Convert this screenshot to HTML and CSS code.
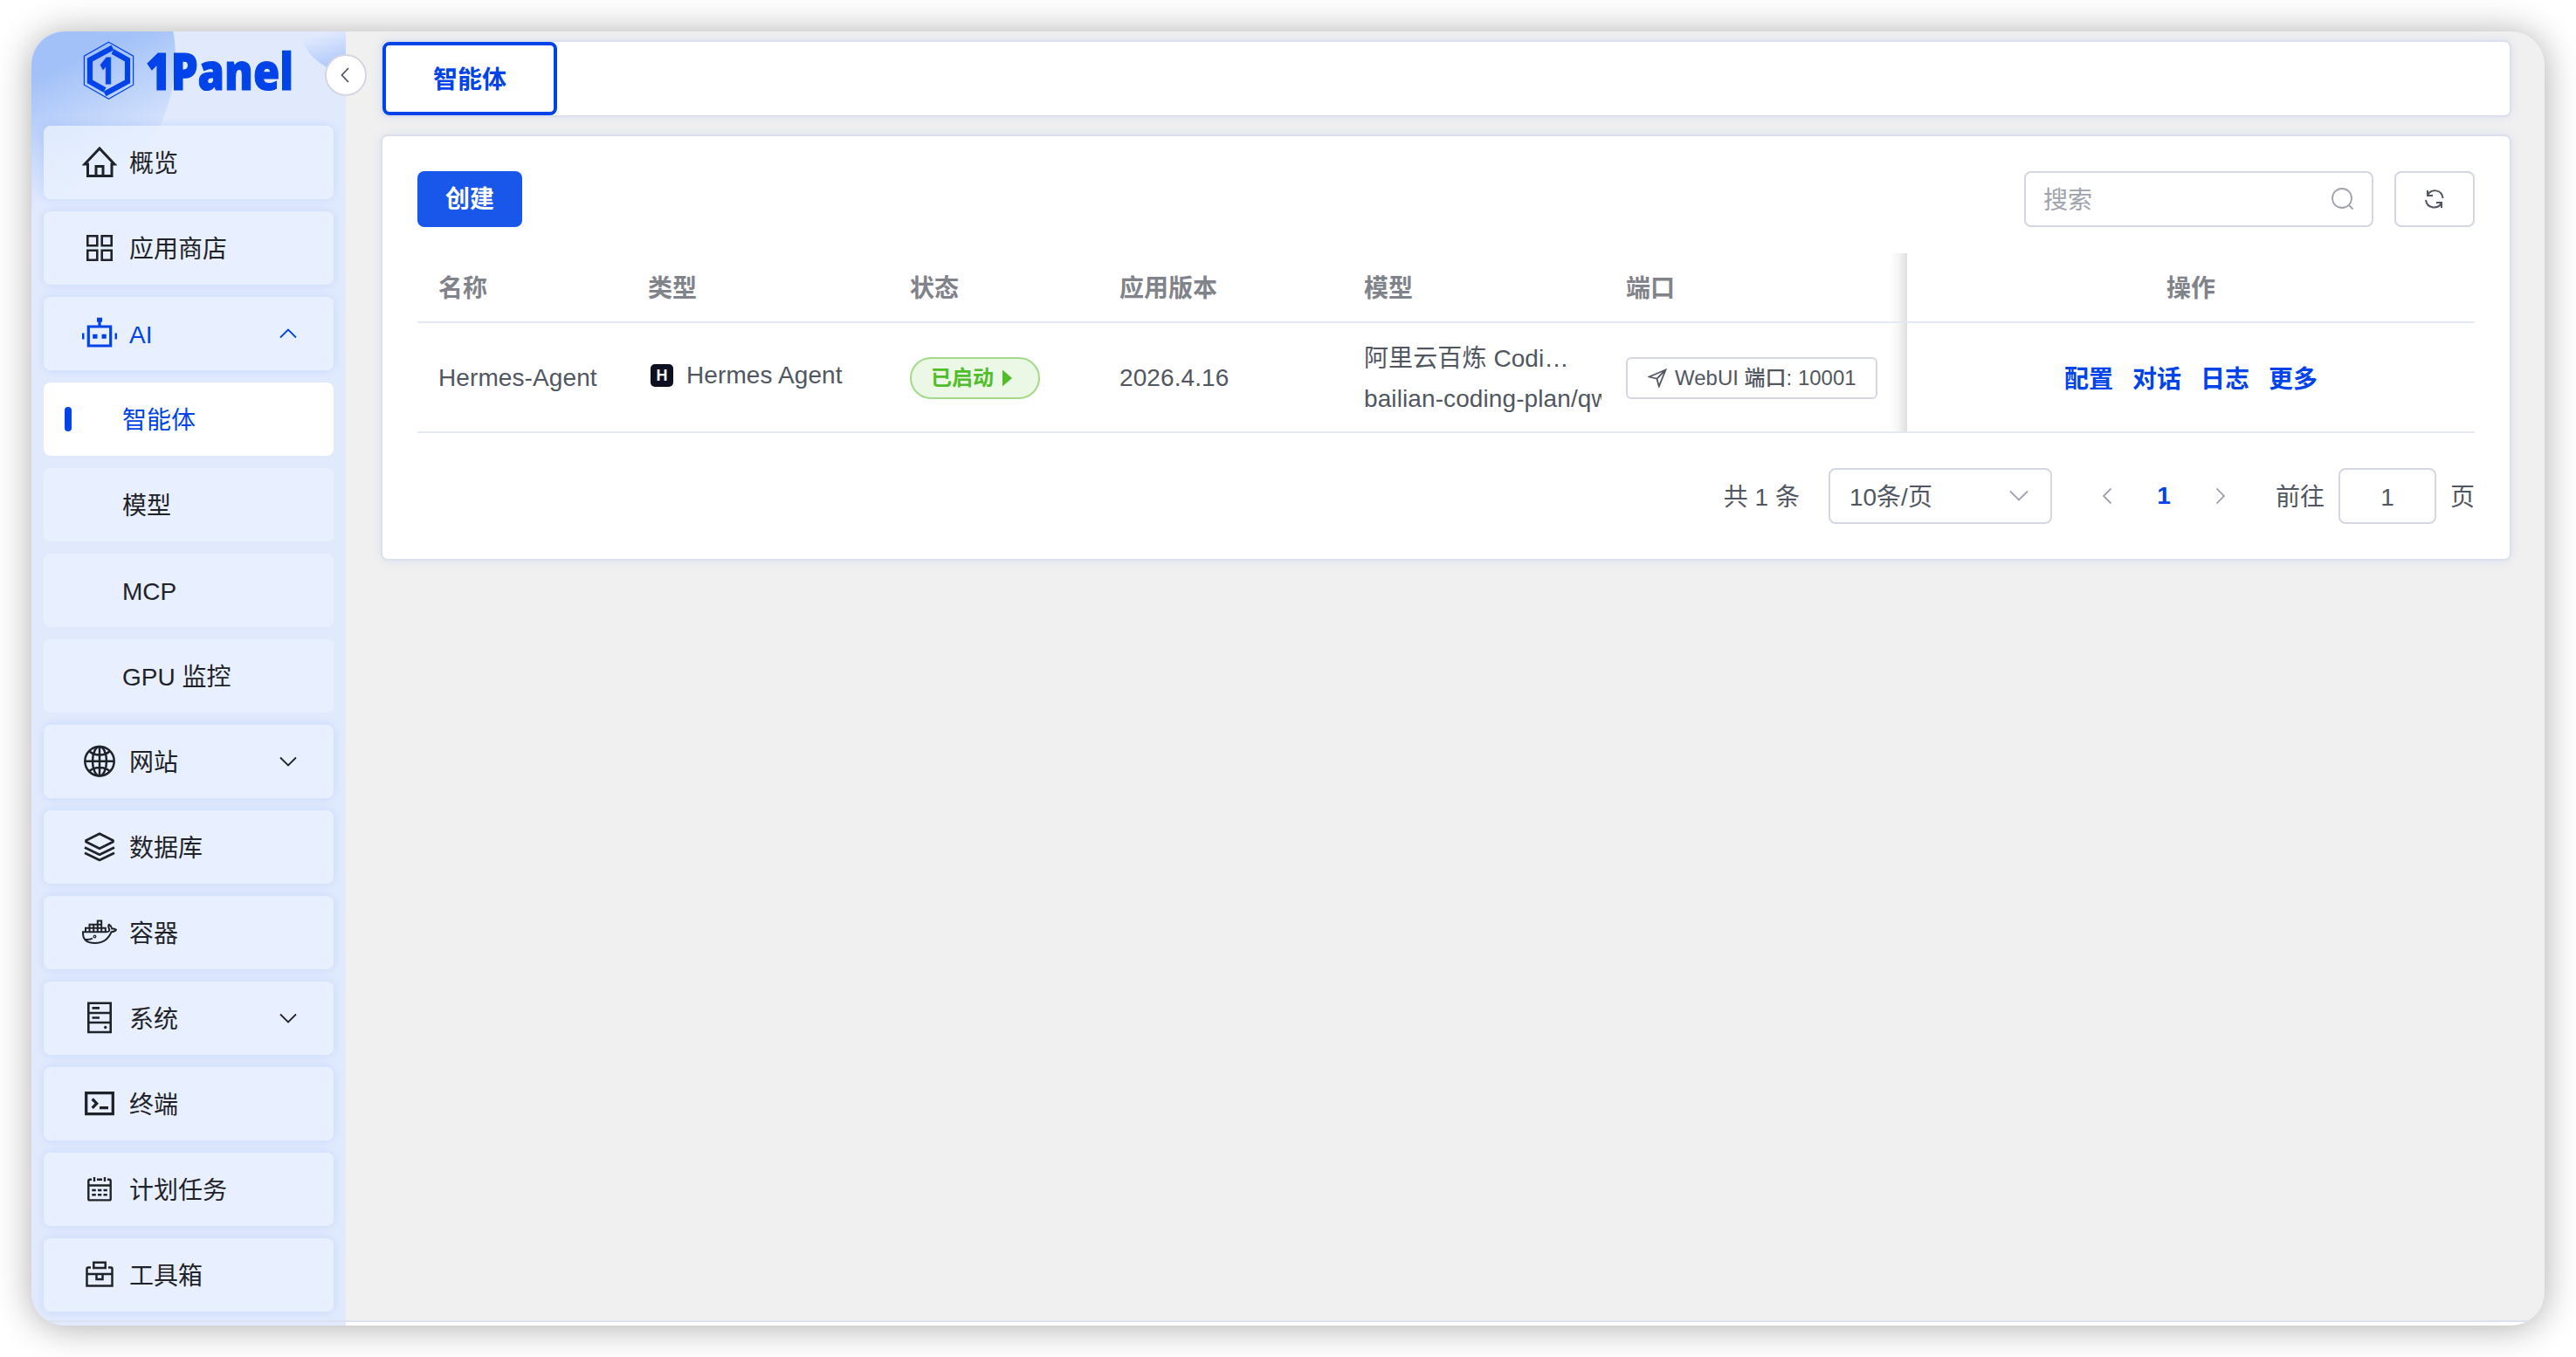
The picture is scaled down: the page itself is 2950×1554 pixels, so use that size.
FILE: index.html
```html
<!DOCTYPE html>
<html lang="zh-CN">
<head>
  <meta charset="UTF-8" />
  <title>1Panel</title>
  <link rel="stylesheet" href="styles.css">
</head>
<body>
  <div class="window">
    <aside class="sidebar">
      <span class="bubble bubble-lg"></span>
      <span class="bubble bubble-sm"></span>
      <div class="logo">
        <svg class="logo-svg" width="260" height="90" viewBox="0 0 260 90">
          <path d="M30.500 1.200 58.600 17.200V50.200L30.500 66.200 2.400 50.200V17.200Z" fill="none" stroke="#0043e8" stroke-width="1.2" />
          <g fill="none" stroke="#0043e8" stroke-width="6.200">
            <path d="M35 7.500 9 21.500V46.500L26 56" />
            <path d="M26 60.500 52 46.500V21.500L35 12" />
          </g>
          <text class="logo-mark" x="20" y="49" textLength="16" lengthAdjust="spacingAndGlyphs">1</text>
          <text class="logo-text" x="73" y="55.500" textLength="169" lengthAdjust="spacingAndGlyphs">1Panel</text>
        </svg>
      </div>
      <nav class="menu">
        <a class="item">
          <svg class="icon" viewBox="0 0 40 40"><path d="M3 22 20 4l17 18h-3v13.500H6.500V22ZM16 35V24.500h8V35" stroke-width="3" /></svg>
          <span>概览</span>
        </a>
        <a class="item">
          <svg class="icon" viewBox="0 0 40 40" stroke-width="2.600"><path d="M6.300 6.300h11v11h-11zM22.700 6.300h11v11h-11zM6.300 22.700h11v11h-11zM22.700 22.700h11v11h-11z" /></svg>
          <span>应用商店</span>
        </a>
        <a class="item current">
          <svg class="icon" viewBox="0 0 40 40" stroke-width="3.200">
            <path d="M7.300 12h25.400v22H7.300zM20 5v7" />
            <path d="M17 1.700h6v5h-6zM12.200 20.700h5.300v5h-5.300zM22.500 20.700h5.300v5h-5.300zM0 19.500h2.500v7H0zM37.500 19.500H40v7h-2.500z" fill="currentColor" stroke="none" />
          </svg>
          <span>AI</span>
          <svg class="arrow" viewBox="0 0 20 12"><path d="m1 10.500 9-9 9 9" /></svg>
        </a>
        <a class="item sub active"><span>智能体</span></a>
        <a class="item sub"><span>模型</span></a>
        <a class="item sub"><span>MCP</span></a>
        <a class="item sub"><span>GPU 监控</span></a>
        <a class="item">
          <svg class="icon" viewBox="0 0 40 40" stroke-width="2.500">
            <circle cx="20" cy="19.700" r="16.700" />
            <ellipse cx="20" cy="19.700" rx="8" ry="16.700" />
            <path d="M20 3v33.400M3 19.700h34M8 8c6 6 18 6 24 0M8 31.400c6-6 18-6 24 0" />
          </svg>
          <span>网站</span>
          <svg class="arrow" viewBox="0 0 20 12"><path d="m1 1.500 9 9 9-9" /></svg>
        </a>
        <a class="item">
          <svg class="icon" viewBox="0 0 40 40" stroke-width="2.700" stroke-linejoin="round"><path d="M20 4.700 35.500 12.500v1.500L20 21.800 4.500 14v-1.500ZM3 20.500l17 8.200 17-8.200M3 26.800 20 35l17-8.200" /></svg>
          <span>数据库</span>
        </a>
        <a class="item">
          <svg class="icon" viewBox="0 0 40 40" stroke-width="2">
            <path d="M1 19.300h27c3 0 3.500-1.500 3-3.500-1.500-3-.5-5 0-5 2 1.200 3 2.700 3.200 4.700 2.300-.3 4 .3 4.800 1.300-1 1.700-3 2.300-5.500 2.400C30 28 24 32 15 32 4 32 .5 27 1 19.300Z" />
            <path d="M4 19v-4.300h4.500V10.800h9.300V6.500h4.400v8.200h4.600V19M8.500 14.700V19M13.200 10.800V19M17.800 10.800V19M22.200 14.700V19M8.500 14.700h13.700M17.800 10.800h4.400M4 28c3.500.3 6-.2 8-1.500" />
            <circle cx="14.500" cy="24.500" r="1.300" stroke-width="1.300" />
          </svg>
          <span>容器</span>
        </a>
        <a class="item">
          <svg class="icon" viewBox="0 0 40 40" stroke-width="2.600">
            <path d="M7.300 2.700h25.400V36H7.300zM7.300 14h25.400M7.300 25h25.400M11.500 8.400h8.500M11.500 19.500h8.500" />
            <circle cx="26.700" cy="30.500" r="1.700" fill="currentColor" stroke="none" />
          </svg>
          <span>系统</span>
          <svg class="arrow" viewBox="0 0 20 12"><path d="m1 1.500 9 9 9-9" /></svg>
        </a>
        <a class="item">
          <svg class="icon" viewBox="0 0 40 40" stroke-width="3.300"><path d="M4.700 7.700h30.600v24H4.700zM11.700 14.500l5 5.200-5 5.200M20 24.700h10" /></svg>
          <span>终端</span>
        </a>
        <a class="item">
          <svg class="icon" viewBox="0 0 40 40" stroke-width="2.400"><path d="M11 8.800H9q-1.700 0-1.700 1.700V31q0 1.400 1.400 1.400h22.600q1.400 0 1.400-1.400V10.500q0-1.700-1.700-1.700h-2M17 8.800h6M14 6v5M26 6v5M7.300 15.500h25.400M11.300 21h4.500M18 21h4.300M24.500 21h4.300M11.300 26.300h4.500M18 26.300h4.300M24.500 26.300h4.300" /></svg>
          <span>计划任务</span>
        </a>
        <a class="item">
          <svg class="icon" viewBox="0 0 40 40" stroke-width="2.500"><path d="M10 11.500H7q-1.500 0-1.500 1.500v19.500h29V13q0-1.500-1.500-1.500h-3M13.300 12V5.700h13.400V12ZM5.500 19h29M16.500 19v6h7v-6" /></svg>
          <span>工具箱</span>
        </a>
      </nav>
      <button class="collapse"><svg width="10" height="18" viewBox="0 0 10 18"><path d="M9 1 1.500 9 9 17" /></svg></button>
    </aside>

    <main class="main">
      <div class="tabs"><a class="tab">智能体</a></div>

      <section class="card">
        <div class="toolbar">
          <button class="btn-primary">创建</button>
          <div class="tools">
            <div class="search">
              <span>搜索</span>
              <svg width="26" height="26" viewBox="0 0 26 26"><circle cx="12" cy="12" r="11" /><path d="m20 20 4.500 4.500" /></svg>
            </div>
            <button class="refresh"><svg width="24" height="24" viewBox="0 0 24 24"><path d="M4 2v6h6M4 8C7.500 0 20 0 21.500 11M20 22v-6h-6M20 16C16.500 24 3.500 23.500 2 13" /></svg></button>
          </div>
        </div>

        <table class="table">
          <colgroup>
            <col class="w-240"><col class="w-300"><col class="w-240"><col class="w-280"><col class="w-300"><col class="w-346"><col class="w-650">
          </colgroup>
          <thead>
            <tr><th>名称</th><th>类型</th><th>状态</th><th>应用版本</th><th>模型</th><th>端口</th><th class="fixed">操作</th></tr>
          </thead>
          <tbody>
            <tr>
              <td>Hermes-Agent</td>
              <td><div class="type"><span class="type-icon">H</span><span>Hermes Agent</span></div></td>
              <td><span class="tag">已启动<svg width="12" height="20" viewBox="0 0 12 20"><path d="M0 .5 11 10 0 19.500Z" /></svg></span></td>
              <td>2026.4.16</td>
              <td class="model">
                <div class="provider">阿里云百炼 Coding Plan</div>
                <div class="model-name">bailian-coding-plan/qwen3.5-plus</div>
              </td>
              <td>
                <button class="port"><svg width="22" height="22" viewBox="0 0 22 22"><path d="M20.500 1.500 1.500 9.500l9 2.200 2.300 8.800ZM10.500 11.700l10-10.200" /></svg>WebUI 端口: 10001</button>
              </td>
              <td class="fixed">
                <div class="actions"><a>配置</a><a>对话</a><a>日志</a><a>更多</a></div>
              </td>
            </tr>
          </tbody>
        </table>

        <div class="pagination">
          <span>共 1 条</span>
          <div class="select"><span>10条/页</span><svg width="24" height="14" viewBox="0 0 24 14"><path d="m2 1.500 10 10 10-10" /></svg></div>
          <svg width="12" height="20" viewBox="0 0 12 20"><path d="m10.500 1.500-8.500 8.500 8.500 8.500" /></svg>
          <b class="page">1</b>
          <svg width="12" height="20" viewBox="0 0 12 20"><path d="M1.500 1.500 10 10l-8.500 8.500" /></svg>
          <span class="goto">前往</span>
          <div class="jump"><span>1</span></div>
          <span>页</span>
        </div>
      </section>
      <footer class="footer"></footer>
    </main>
    <span class="bottom-line"></span>
  </div>
</body>
</html>
```
FILE: styles.css
```css
* {
  box-sizing: border-box;
}
body {
  margin: 0;
  padding: 36px;
  height: 1554px;
  background: #fff;
  color: #515761;
  font-family: "Liberation Sans", "Noto Sans CJK SC", sans-serif;
  font-size: 28px;
  line-height: 40px;
}
button {
  font: inherit;
  color: inherit;
  margin: 0;
  padding: 0;
  background: #fff;
}
svg {
  display: block;
  flex: none;
  fill: none;
  stroke: currentColor;
}
.window {
  position: relative;
  display: flex;
  height: 1482px;
  border-radius: 38px;
  background: #f0f0f0;
  box-shadow: 0 2px 42px rgba(0, 0, 0, 0.33);
}
.sidebar {
  position: relative;
  flex: none;
  z-index: 1;
  width: 360px;
  height: 1482px;
  padding: 0 14px;
  background: #e1eafd;
  border-radius: 38px 0 0 38px;
}

/* background bubbles behind the logo */
.bubble {
  position: absolute;
  inset: 0;
  border-radius: 38px 0 0 0;
  pointer-events: none;
}
.bubble-lg {
  background: linear-gradient(155deg, #a2c1f8 50px, rgba(225, 234, 253, 0) 185px);
  clip-path: circle(180px at -15px 29px);
}
.bubble-sm {
  background: linear-gradient(165deg, #e1eafd 15%, #9fbefa 85%) right top / 60px 60px no-repeat;
  clip-path: circle(58px at 364px -11px);
}
.logo {
  position: relative;
  height: 108px;
  padding: 11px 0 0 44px;
}
.logo-svg text {
  fill: #0043e8;
  stroke: #0043e8;
  stroke-width: 1.2;
  font-family: "Open Sans", sans-serif;
  font-weight: 800;
}
.logo-mark {
  font-size: 42px;
}
.logo-text {
  font-size: 59px;
}

.menu {
  position: relative;
  display: flex;
  flex-direction: column;
  gap: 14px;
}
.item {
  display: flex;
  align-items: center;
  height: 84px;
  padding: 0 42px 0 44px;
  border-radius: 8px;
  background: rgba(234, 242, 255, 0.75);
  box-shadow: 0 0 12px rgba(0, 94, 235, 0.12);
  color: #1f2329;
}
.item span,
.search span,
.pagination span {
  padding-top: 3px;
}
.icon {
  width: 40px;
  height: 40px;
  margin-right: 14px;
}
.arrow {
  width: 20px;
  height: 12px;
  margin-left: auto;
  stroke-width: 1.8;
}
.current {
  color: #0043e8;
}
.sub {
  padding-left: 90px;
  box-shadow: none;
}
.sub.active {
  padding-left: 24px;
  background: #fff;
  color: #0043e8;
}
.sub.active::before {
  content: "";
  width: 8px;
  height: 28px;
  margin-right: 58px;
  border-radius: 4px;
  background: #0043e8;
}
.collapse {
  position: absolute;
  top: 26px;
  right: -24px;
  width: 48px;
  height: 48px;
  display: flex;
  align-items: center;
  justify-content: center;
  padding-right: 2px;
  border: 2px solid #d4d7e2;
  border-radius: 50%;
  stroke-width: 1.8;
}

.main {
  flex: 1;
  display: flex;
  flex-direction: column;
  min-width: 0;
  padding: 10px 38px 0 40px;
  border-radius: 0 38px 38px 0;
  overflow: hidden;
}
.tabs,
.card {
  background: #fff;
  border: 2px solid #dce0ec;
  border-radius: 8px;
  box-shadow: 0 0 12px rgba(0, 94, 235, 0.1);
}
.tabs {
  height: 88px;
  margin-bottom: 20px;
}
.tab {
  display: flex;
  align-items: center;
  justify-content: center;
  width: 200px;
  height: 84px;
  padding-top: 3px;
  border: 4px solid #0043e8;
  border-radius: 8px;
  color: #0043e8;
  font-weight: 600;
}
.card {
  height: 488px;
  padding: 40px;
}
.toolbar {
  display: flex;
  justify-content: space-between;
  margin-bottom: 30px;
}
.btn-primary {
  width: 120px;
  height: 64px;
  padding-top: 2px;
  border: none;
  border-radius: 8px;
  background: #1956ea;
  color: #fff;
  font-weight: 600;
}
.tools {
  display: flex;
  gap: 24px;
}
.search {
  display: flex;
  align-items: center;
  justify-content: space-between;
  width: 400px;
  height: 64px;
  padding: 0 20px;
  border: 2px solid #d4d7e2;
  border-radius: 8px;
  color: #a0a3ad;
}
.search svg {
  stroke-width: 1.8;
}
.refresh {
  display: flex;
  align-items: center;
  justify-content: center;
  width: 92px;
  height: 64px;
  border: 2px solid #d4d7e2;
  border-radius: 8px;
}
.refresh svg {
  stroke-width: 2;
}

.table {
  width: 2356px;
  table-layout: fixed;
  border-collapse: separate;
  border-spacing: 0;
}
.w-240 { width: 240px; }
.w-280 { width: 280px; }
.w-300 { width: 300px; }
.w-346 { width: 346px; }
.w-650 { width: 650px; }
.table th {
  height: 80px;
  padding: 3px 24px 0;
  border-bottom: 2px solid #e5e8f1;
  color: #808389;
  font-weight: 600;
  text-align: left;
}
.table td {
  height: 126px;
  padding: 1px 24px 0;
  border-bottom: 2px solid #e5e8f1;
  letter-spacing: 0.1px;
}
.table .fixed {
  position: relative;
  text-align: center;
}
/* shadow cast on the scrolling columns by the fixed one */
.fixed::before {
  content: "";
  position: absolute;
  top: 0;
  bottom: 0;
  left: -20px;
  width: 20px;
  background: linear-gradient(to left, rgba(0, 0, 0, 0.13), rgba(0, 0, 0, 0.04) 50%, transparent);
}
.type {
  display: flex;
  align-items: center;
  margin-top: -6px;
}
.type-icon {
  width: 26px;
  height: 26px;
  margin: 0 15px 0 3px;
  border-radius: 5px;
  background: #0d1020;
  color: #fff;
  font-size: 18px;
  font-weight: bold;
  line-height: 26px;
  text-align: center;
}
.tag {
  display: flex;
  align-items: center;
  gap: 10px;
  width: 149px;
  height: 48px;
  padding-left: 22px;
  border: 2px solid #a3da89;
  border-radius: 24px;
  background: #ecf8e6;
  color: #52bd2a;
  font-size: 24px;
  font-weight: 600;
  letter-spacing: 0;
}
.tag svg {
  fill: currentColor;
  stroke: none;
}
.table .model {
  padding: 3px 4px 0 24px;
  line-height: 46px;
}
.provider,
.model-name {
  overflow: hidden;
  white-space: nowrap;
}
.provider {
  width: 240px;
  text-overflow: ellipsis;
}
.port {
  display: flex;
  align-items: center;
  gap: 9px;
  width: 288px;
  height: 48px;
  padding: 1px 0 0 23px;
  border: 2px solid #d4d7e2;
  border-radius: 6px;
  font-size: 24px;
  font-weight: 500;
  letter-spacing: 0;
  white-space: nowrap;
}
.port svg {
  stroke-width: 1.8;
}
.actions {
  display: flex;
  justify-content: center;
  gap: 22px;
  padding-top: 5px;
  color: #0043e8;
  font-weight: 600;
  letter-spacing: 0;
}

.pagination {
  display: flex;
  align-items: center;
  justify-content: flex-end;
  margin-top: 40px;
  height: 64px;
}
.select {
  display: flex;
  align-items: center;
  justify-content: space-between;
  width: 256px;
  height: 64px;
  margin: 0 57px 0 33px;
  padding: 0 24px 0 22px;
  border: 2px solid #d4d7e2;
  border-radius: 8px;
}
.pagination svg {
  color: #a0a3ad;
  stroke-width: 1.8;
}
.page {
  width: 64px;
  margin: 0 27px;
  color: #0043e8;
  text-align: center;
}
.goto {
  margin: 0 16px 0 57px;
}
.jump {
  display: flex;
  align-items: center;
  justify-content: center;
  width: 112px;
  height: 64px;
  margin-right: 16px;
  border: 2px solid #d4d7e2;
  border-radius: 8px;
}
.footer {
  height: 4px;
  margin: auto -38px 0 -40px;
  background: #fff;
}
.bottom-line {
  position: absolute;
  z-index: 1;
  right: 18px;
  bottom: 4px;
  left: 18px;
  height: 2px;
  background: #dbe1ee;
}
```
